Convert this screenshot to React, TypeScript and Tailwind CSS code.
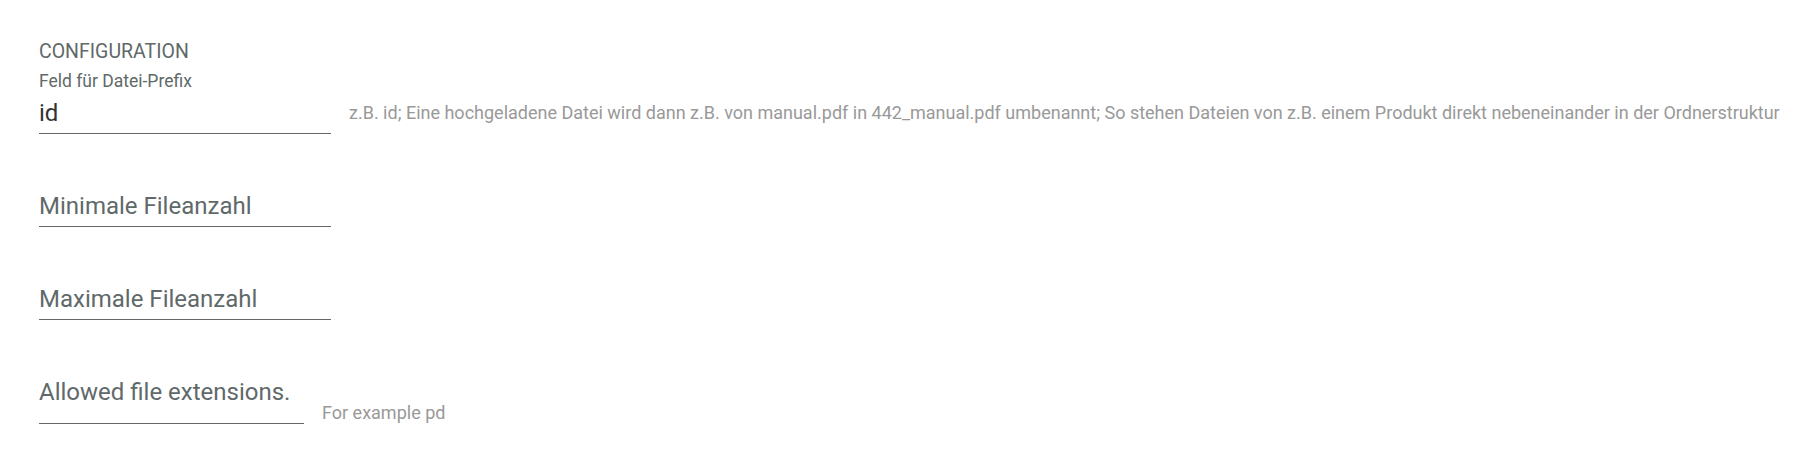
export default function App() {
  return (
    <div className="min-h-screen bg-white pl-[39px] pt-[40px] font-['Roboto',sans-serif]">
      <div className="text-[19.5px] leading-[23px] text-[#5f6969] uppercase">Configuration</div>
      <div className="mt-[8px] text-[17.5px] leading-[20px] text-[#5f6969]">Feld für Datei-Prefix</div>

      <div className="mt-[8px] flex items-end">
        <div className="w-[292px] border-b border-[#666] pb-[6px]">
          <input
            defaultValue="id"
            className="block w-full bg-transparent text-[24px] leading-[28px] text-[#333] outline-none"
          />
        </div>
        <span className="ml-[18px] mb-[11px] text-[18px] leading-[21px] text-[#999] whitespace-nowrap">
          z.B. id; Eine hochgeladene Datei wird dann z.B. von manual.pdf in 442_manual.pdf umbenannt; So stehen
          Dateien von z.B. einem Produkt direkt nebeneinander in der Ordnerstruktur
        </span>
      </div>

      <div className="mt-[58px] w-[292px] border-b border-[#666] pb-[6px]">
        <input
          placeholder="Minimale Fileanzahl"
          className="block w-full bg-transparent text-[24px] leading-[28px] text-[#333] placeholder:text-[#5f6969] outline-none"
        />
      </div>

      <div className="mt-[58px] w-[292px] border-b border-[#666] pb-[6px]">
        <input
          placeholder="Maximale Fileanzahl"
          className="block w-full bg-transparent text-[24px] leading-[28px] text-[#333] placeholder:text-[#5f6969] outline-none"
        />
      </div>

      <div className="mt-[58px] flex items-end">
        <div className="w-[265px] border-b border-[#666] pb-[17px]">
          <input
            placeholder="Allowed file extensions."
            className="block w-full bg-transparent text-[24px] leading-[28px] text-[#333] placeholder:text-[#5f6969] outline-none"
          />
        </div>
        <span className="ml-[18px] mb-[1px] text-[18px] leading-[21px] text-[#999]">For example pd</span>
      </div>
    </div>
  );
}
